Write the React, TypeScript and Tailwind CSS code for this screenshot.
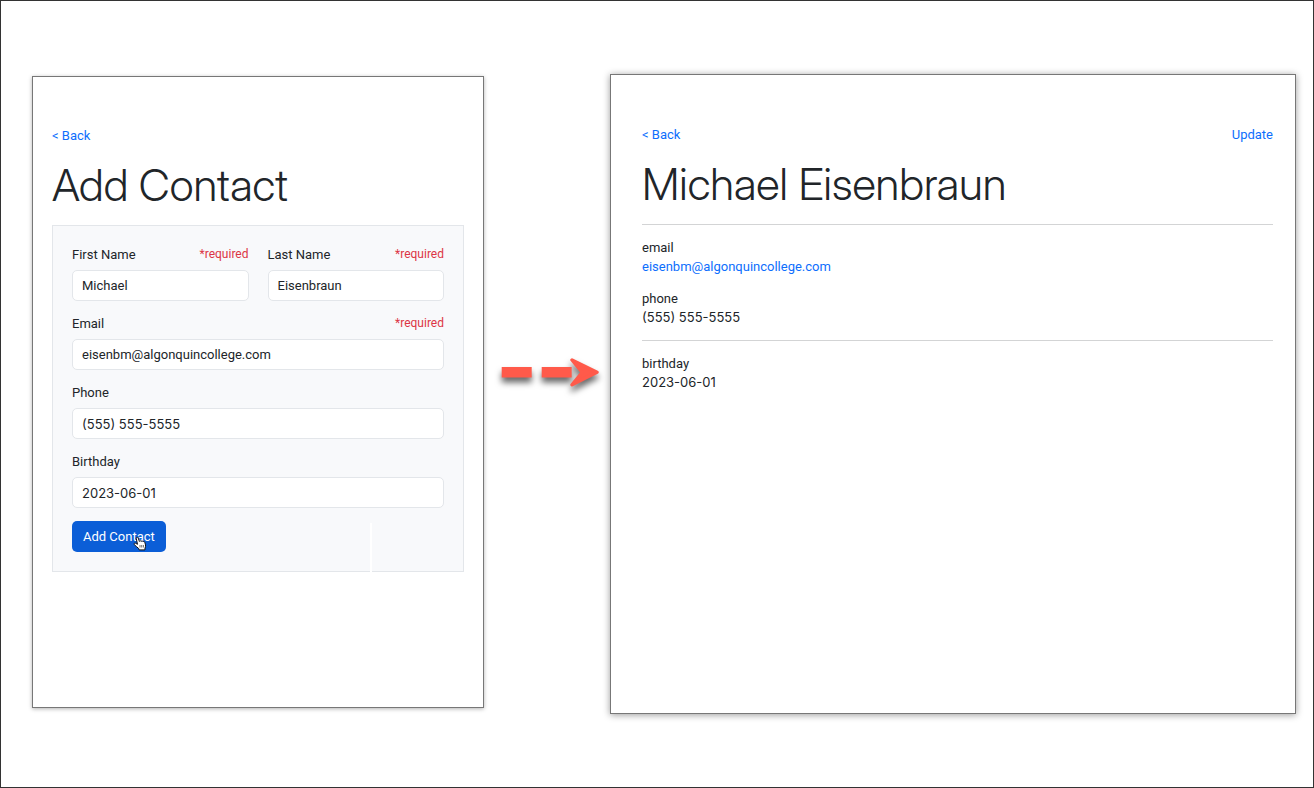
import React from "react";

type FieldProps = {
  id: string;
  label: string;
  value: string;
  type?: string;
  required?: boolean;
  numeric?: boolean;
};

function Field({ id, label, value, type = "text", required = false, numeric = false }: FieldProps) {
  return (
    <div className="min-w-0 flex-1">
      <div className="mb-[5px] flex justify-between">
        <label htmlFor={id} className="leading-5">
          {label}
        </label>
        {required && <span className="text-[12px] leading-[18px] text-[#dc3545]">*required</span>}
      </div>
      <input
        id={id}
        type={type}
        defaultValue={value}
        required={required}
        className={`block h-[31px] w-full rounded-[5px] border border-[#e3e6ea] bg-white px-[9px] text-[13px] text-[#212529] outline-none focus:border-[#86b7fe] ${numeric ? "font-['Inter',sans-serif]" : ""}`}
      />
    </div>
  );
}

function BackLink() {
  return (
    <a href="#contacts" className="leading-5 text-[#0d6efd]">
      &lt; Back
    </a>
  );
}

function Heading({ children }: { children: React.ReactNode }) {
  return (
    <h1 className="mt-[13px] mb-[14px] font-['Inter_Display','Inter',sans-serif] text-[44px] leading-[52px] font-light">
      {children}
    </h1>
  );
}

function HandCursor() {
  return (
    <svg
      viewBox="0 0 14 16"
      className="pointer-events-none absolute right-[19px] bottom-0 h-4 w-[14px]"
      aria-hidden="true"
    >
      <path
        d="M3.2 2.2c-.2-.9 1.4-1.5 1.9-.4l1.3 3.6c.2-.8 1.5-.8 1.8 0 .4-.6 1.5-.5 1.8.2.6-.4 1.6-.1 1.8.7l.7 2.6c.3 1.4-.2 2.3-.5 3.3l-.1 1.7H6.2l-.4-1.3C4.5 11.4 3 10.3 1.3 8.7c-.9-1 .3-2.1 1.4-1.4l1.8 1z"
        fill="#fff"
        stroke="#111"
        strokeWidth="1"
        strokeLinejoin="round"
      />
      <path d="M7 9v2.5M8.7 9v2.5M10.4 9v2.5" stroke="#333" strokeWidth=".7" />
    </svg>
  );
}

function Arrow() {
  return (
    <svg
      viewBox="0 0 126 70"
      className="mt-[266px] h-[70px] w-full drop-shadow-[0_5px_3px_rgba(0,0,0,0.6)]"
      aria-hidden="true"
    >
      <g fill="#ff5a4a" stroke="#ff5a4a">
        <path d="M17.7 27h30v10.5h-30zM57.7 27h30v10.5h-30z" stroke="none" />
        <path
          d="M88 20l25 12.3L88 44.8l10.3-12.5z"
          strokeWidth="3.4"
          strokeLinejoin="round"
        />
      </g>
    </svg>
  );
}

type DetailProps = { label: string; numeric?: boolean; children: React.ReactNode };

function Detail({ label, numeric = false, children }: DetailProps) {
  return (
    <div>
      <dt>{label}</dt>
      <dd className={numeric ? "font-['Inter',sans-serif]" : ""}>{children}</dd>
    </div>
  );
}

export default function App() {
  return (
    <main className="grid min-h-screen grid-cols-[452fr_126px_686fr] items-start border border-[#333] bg-white pt-[73px] pr-[17px] pb-[73px] pl-[31px] font-['Roboto',sans-serif] text-[13px] text-[#212529]">
      <section className="mt-0.5 min-h-[632px] border border-[#777] px-[19px] pt-[49px] shadow-[0_1px_4px_rgba(0,0,0,0.3)]">
        <div className="flex">
          <BackLink />
        </div>
        <Heading>Add Contact</Heading>
        <form
          className="relative flex flex-col gap-[13px] border border-[#e3e6ea] bg-[#f8f9fb] p-[19px]"
          onSubmit={(e) => e.preventDefault()}
        >
          <div className="flex gap-[19px]">
            <Field id="first" label="First Name" value="Michael" required />
            <Field id="last" label="Last Name" value="Eisenbraun" required />
          </div>
          <Field id="email" label="Email" value="eisenbm@algonquincollege.com" type="email" required />
          <Field id="phone" label="Phone" value="(555) 555-5555" type="tel" numeric />
          <Field id="birthday" label="Birthday" value="2023-06-01" numeric />
          <div className="flex">
            <button
              type="submit"
              className="relative h-[31px] cursor-pointer rounded-[5px] bg-[#0b5ed7] px-[11px] text-white"
            >
              Add Contact
              <HandCursor />
            </button>
          </div>
          <span className="absolute right-[91px] -bottom-px h-[49px] w-[2px] bg-white" />
        </form>
      </section>

      <Arrow />

      <section className="min-h-[640px] border border-[#777] pt-[50px] pr-[22px] pl-[31px] shadow-[0_1px_7px_rgba(0,0,0,0.4)]">
        <div className="flex justify-between">
          <BackLink />
          <a href="#update" className="leading-5 text-[#0d6efd]">
            Update
          </a>
        </div>
        <Heading>Michael Eisenbraun</Heading>
        <dl className="flex flex-col gap-[13px] border-t border-[#d3d4d5] py-[13px] leading-[19px]">
          <Detail label="email">
            <a href="mailto:eisenbm@algonquincollege.com" className="text-[#0d6efd]">
              eisenbm@algonquincollege.com
            </a>
          </Detail>
          <Detail label="phone" numeric>
            (555) 555-5555
          </Detail>
        </dl>
        <dl className="border-t border-[#d3d4d5] pt-[13px] leading-[19px]">
          <Detail label="birthday" numeric>
            2023-06-01
          </Detail>
        </dl>
      </section>
    </main>
  );
}
